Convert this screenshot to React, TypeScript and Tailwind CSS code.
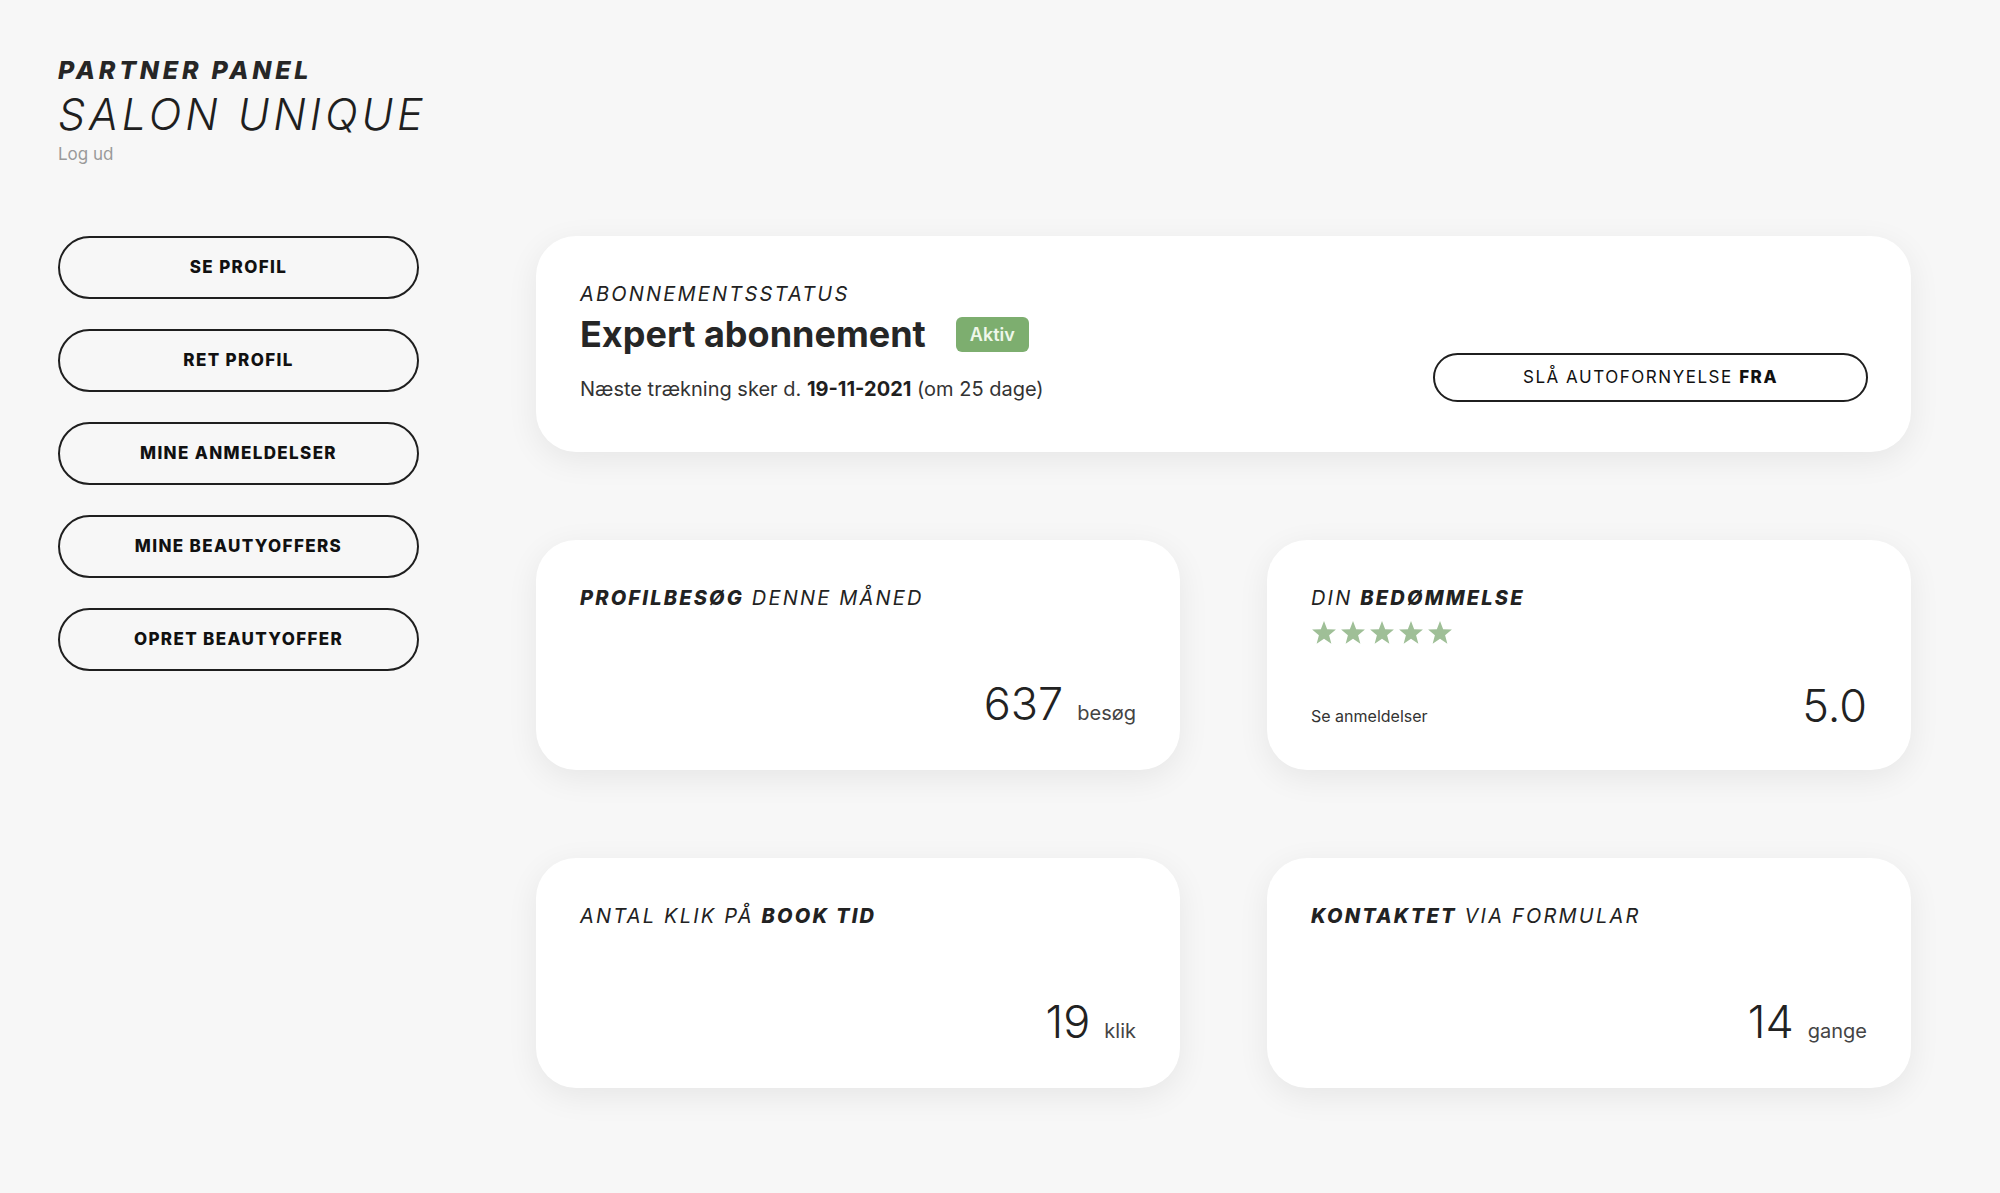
import { ReactNode } from 'react'

const navItems = ['Se profil', 'Ret profil', 'Mine anmeldelser', 'Mine beautyoffers', 'Opret beautyoffer']

function Star() {
  return (
    <svg viewBox="0 0 24 24" className="w-[26px] h-[26px]" fill="#9fbf97">
      <path d="M12 1.8l2.9 7.6 8.1.4-6.3 5.1 2.1 7.9L12 18.3l-6.8 4.5 2.1-7.9L1 9.8l8.1-.4z" />
    </svg>
  )
}

function StatCard({ title, children }: { title: ReactNode; children: ReactNode }) {
  return (
    <div className="h-[230px] bg-white rounded-[40px] shadow-[0_8px_32px_rgba(0,0,0,0.07)] px-[44px] pt-[44px] pb-[42px] flex flex-col justify-between">
      <div>{title}</div>
      {children}
    </div>
  )
}

function Heading({ children }: { children: ReactNode }) {
  return <p className="text-[20px] leading-[28px] italic tracking-[0.11em] text-[#222] uppercase">{children}</p>
}

function Value({ value, unit }: { value: string; unit: string }) {
  return (
    <div className="flex items-baseline justify-end gap-[14px] text-[#222]">
      <span className="text-[45px] leading-[45px] font-light">{value}</span>
      <span className="text-[20px] text-[#444]">{unit}</span>
    </div>
  )
}

export default function App() {
  return (
    <div
      className="min-h-screen bg-[#f7f7f7] text-[#222] pt-[56px] pl-[58px] pr-[89px] pb-[100px]"
      style={{ fontFamily: 'Inter, "Noto Sans", sans-serif' }}
    >
      {/* Header */}
      <div className="h-[180px]">
        <h2 className="text-[25px] leading-[29px] font-extrabold italic tracking-[0.15em] text-[#262626]">PARTNER PANEL</h2>
        <h1 className="mt-[4px] text-[43px] leading-[50px] font-light italic tracking-[0.09em] text-[#1f1f1f]">SALON UNIQUE</h1>
        <a className="block mt-[5px] text-[17px] leading-[20px] text-[#9a9a9a]">Log ud</a>
      </div>

      <div className="flex">
        {/* Sidebar */}
        <nav className="w-[361px] flex flex-col gap-[30px] shrink-0">
          {navItems.map((item) => (
            <button
              key={item}
              className="h-[63px] w-full rounded-full border-2 border-[#1f1f1f] text-[17px] font-extrabold uppercase tracking-[0.08em] text-[#111]"
            >
              {item}
            </button>
          ))}
        </nav>

        {/* Main */}
        <main className="flex-1 ml-[117px] flex flex-col gap-[88px]">
          <div className="h-[216px] bg-white rounded-[40px] shadow-[0_8px_32px_rgba(0,0,0,0.07)] pl-[44px] pr-[43px] pt-[44px] flex items-start justify-between">
            <div>
              <Heading>Abonnementsstatus</Heading>
              <div className="mt-[5px] flex items-center">
                <h3 className="text-[36px] leading-[42px] font-bold text-[#262626]">Expert abonnement</h3>
                <span className="ml-[30px] h-[35px] px-[14px] rounded-[6px] bg-[#7dae6f] text-[#eef7ea] text-[18px] font-semibold flex items-center">
                  Aktiv
                </span>
              </div>
              <p className="mt-[21px] text-[20px] leading-[26px] text-[#333]">
                Næste trækning sker d. <b className="font-bold text-[#1f1f1f]">19-11-2021</b> (om 25 dage)
              </p>
            </div>
            <button className="mt-[73px] h-[49px] w-[435px] rounded-full border-2 border-[#1f1f1f] text-[17px] tracking-[0.09em] text-[#111]">
              SLÅ AUTOFORNYELSE <b className="font-extrabold">FRA</b>
            </button>
          </div>

          <div className="grid grid-cols-2 gap-x-[87px] gap-y-[88px]">
            <StatCard
              title={
                <Heading>
                  <b className="font-extrabold">Profilbesøg</b> denne måned
                </Heading>
              }
            >
              <Value value="637" unit="besøg" />
            </StatCard>

            <StatCard
              title={
                <>
                  <Heading>
                    Din <b className="font-extrabold">bedømmelse</b>
                  </Heading>
                  <div className="mt-[7px] flex gap-[3px]">
                    {[...Array(5)].map((_, i) => (
                      <Star key={i} />
                    ))}
                  </div>
                </>
              }
            >
              <div className="flex items-baseline justify-between">
                <a className="text-[16px] text-[#333]">Se anmeldelser</a>
                <span className="text-[45px] leading-[45px] font-light text-[#222]">5.0</span>
              </div>
            </StatCard>

            <StatCard
              title={
                <Heading>
                  Antal klik på <b className="font-extrabold">book tid</b>
                </Heading>
              }
            >
              <Value value="19" unit="klik" />
            </StatCard>

            <StatCard
              title={
                <Heading>
                  <b className="font-extrabold">Kontaktet</b> via formular
                </Heading>
              }
            >
              <Value value="14" unit="gange" />
            </StatCard>
          </div>
        </main>
      </div>
    </div>
  )
}
